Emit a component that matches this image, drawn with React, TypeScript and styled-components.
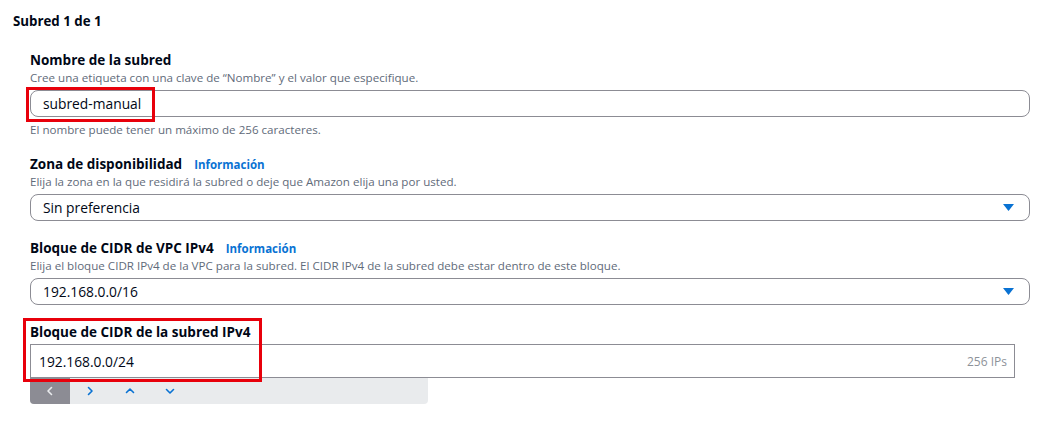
import React from 'react';
import styled, { createGlobalStyle } from 'styled-components';

const Global = createGlobalStyle`
  html, body { margin: 0; padding: 0; background: #ffffff; }
  body { font-family: 'Open Sans', 'Noto Sans', Arial, sans-serif; color: #000716; }
`;

const Page = styled.div`
  width: 1057px; height: 423px; overflow: hidden;
  padding: 12px 0 0 13px; box-sizing: border-box;
`;

const Heading = styled.div`
  font-size: 13.3px; font-weight: 700; line-height: 18px;
`;

const Fields = styled.div`
  display: flex; flex-direction: column;
  padding-left: 17px; margin-top: 20px;
`;

const Field = styled.div<{ $gap?: number }>`
  position: relative;
  display: flex; flex-direction: column;
  margin-bottom: ${p => p.$gap ?? 16}px;
`;

const LabelRow = styled.div`
  display: flex; align-items: baseline; gap: 12px;
`;

const Label = styled.div`
  font-size: 13.5px; font-weight: 700; line-height: 20px;
`;

const Info = styled.a`
  font-size: 11.5px; font-weight: 700; color: #0972d3; text-decoration: none;
`;

const Desc = styled.div`
  font-size: 11.6px; line-height: 16px; color: #5f6b7a;
`;

const Hint = styled(Desc)`
  margin-top: 5px;
`;

const Box = styled.div<{ $square?: boolean; $width: number; $height: number; $top?: number }>`
  margin-top: ${p => p.$top ?? 4}px;
  width: ${p => p.$width}px; height: ${p => p.$height}px;
  box-sizing: border-box;
  border: 1px solid #8c8c94;
  border-radius: ${p => (p.$square ? 0 : 8)}px;
  display: flex; align-items: center; justify-content: space-between;
  padding: 0 ${p => (p.$square ? 7 : 15)}px 0 ${p => (p.$square ? 8 : 12)}px;
  font-size: 13.8px; color: #000716;
`;

const Count = styled.span`
  font-size: 12px; color: #8d9299;
`;

const Caret = styled.svg`
  width: 11px; height: 7px;
`;

const Highlight = styled.div<{ $l: number; $t: number; $w: number; $h: number }>`
  position: absolute;
  left: ${p => p.$l}px; top: ${p => p.$t}px;
  width: ${p => p.$w}px; height: ${p => p.$h}px;
  border: 3px solid #e8000b; box-sizing: border-box;
  pointer-events: none;
`;

const Toolbar = styled.div`
  display: flex; width: 398px; height: 26px;
  background: #e9ebed;
  border-radius: 0 0 4px 4px;
  overflow: hidden;
`;

const ToolBtn = styled.div<{ $active?: boolean }>`
  width: 40px; height: 26px;
  display: flex; align-items: center; justify-content: center;
  background: ${p => (p.$active ? '#8c8c94' : 'transparent')};
  color: ${p => (p.$active ? '#e9ebed' : '#0972d3')};
`;

const Chevron = ({ d }: { d: string }) => (
  <svg width="12" height="12" viewBox="0 0 12 12" fill="none">
    <path d={d} stroke="currentColor" strokeWidth="1.6" strokeLinecap="round" strokeLinejoin="round" />
  </svg>
);

const SelectCaret = () => (
  <Caret viewBox="0 0 11 7">
    <path d="M0 0 H11 L5.5 7 Z" fill="#0972d3" />
  </Caret>
);

export default function App() {
  return (
    <Page>
      <Global />
      <Heading>Subred 1 de 1</Heading>
      <Fields>
        <Field $gap={16}>
          <Label>Nombre de la subred</Label>
          <Desc>Cree una etiqueta con una clave de “Nombre” y el valor que especifique.</Desc>
          <Box $width={1000} $height={27}>subred-manual</Box>
          <Hint>El nombre puede tener un máximo de 256 caracteres.</Hint>
          <Highlight $l={-4} $t={37} $w={129} $h={35} />
        </Field>

        <Field $gap={17}>
          <LabelRow>
            <Label>Zona de disponibilidad</Label>
            <Info href="#">Información</Info>
          </LabelRow>
          <Desc>Elija la zona en la que residirá la subred o deje que Amazon elija una por usted.</Desc>
          <Box $width={1000} $height={27}>
            Sin preferencia
            <SelectCaret />
          </Box>
        </Field>

        <Field $gap={17}>
          <LabelRow>
            <Label>Bloque de CIDR de VPC IPv4</Label>
            <Info href="#">Información</Info>
          </LabelRow>
          <Desc>Elija el bloque CIDR IPv4 de la VPC para la subred. El CIDR IPv4 de la subred debe estar dentro de este bloque.</Desc>
          <Box $width={1000} $height={27}>
            192.168.0.0/16
            <SelectCaret />
          </Box>
        </Field>

        <Field $gap={0}>
          <Label>Bloque de CIDR de la subred IPv4</Label>
          <Box $square $top={2} $width={985} $height={34}>
            192.168.0.0/24
            <Count>256 IPs</Count>
          </Box>
          <Toolbar>
            <ToolBtn $active><Chevron d="M7.5 2.5 L4 6 L7.5 9.5" /></ToolBtn>
            <ToolBtn><Chevron d="M4.5 2.5 L8 6 L4.5 9.5" /></ToolBtn>
            <ToolBtn><Chevron d="M2.5 7.5 L6 4 L9.5 7.5" /></ToolBtn>
            <ToolBtn><Chevron d="M2.5 4.5 L6 8 L9.5 4.5" /></ToolBtn>
          </Toolbar>
          <Highlight $l={-7} $t={-4} $w={239} $h={64} />
        </Field>
      </Fields>
    </Page>
  );
}
